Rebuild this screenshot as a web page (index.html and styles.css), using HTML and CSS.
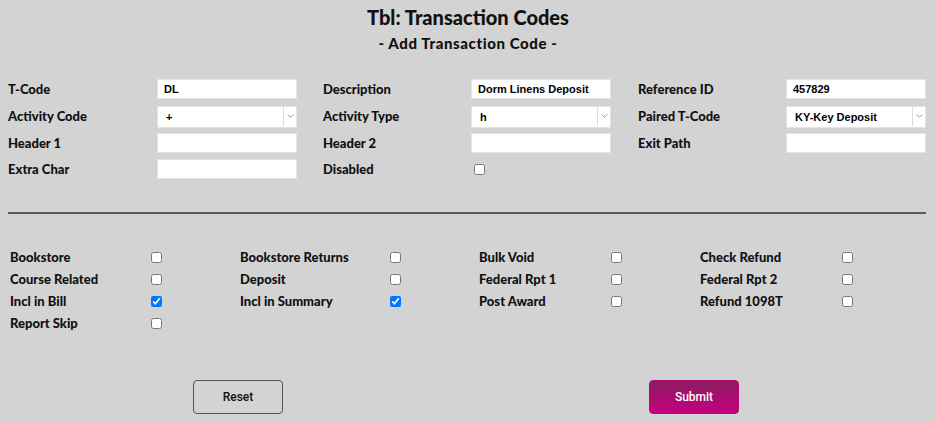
FILE: index.html
```html
<!DOCTYPE html>
<html>
<head>
<meta charset="utf-8">
<link rel="stylesheet" href="styles.css">
</head>
<body>
<header class="head">
  <h1 class="title">Tbl: Transaction Codes</h1>
  <h2 class="subtitle">- Add Transaction Code -</h2>
</header>
<form class="form">
  <div class="fields">
    <label class="lbl">T-Code</label>
    <input class="txt" type="text" value="DL">
    <label class="lbl lbl-2">Description</label>
    <input class="txt" type="text" value="Dorm Linens Deposit">
    <label class="lbl lbl-3">Reference ID</label>
    <input class="txt" type="text" value="457829">

    <label class="lbl">Activity Code</label>
    <div class="sel"><select><option>+</option></select><span class="arrow"><svg width="7" height="4" viewBox="0 0 7 4"><path d="M0.5 0.5 L3.5 3.2 L6.5 0.5" fill="none" stroke="#9a9a9a" stroke-width="1"/></svg></span></div>
    <label class="lbl lbl-2">Activity Type</label>
    <div class="sel"><select><option>h</option></select><span class="arrow"><svg width="7" height="4" viewBox="0 0 7 4"><path d="M0.5 0.5 L3.5 3.2 L6.5 0.5" fill="none" stroke="#9a9a9a" stroke-width="1"/></svg></span></div>
    <label class="lbl lbl-3">Paired T-Code</label>
    <div class="sel"><select><option>KY-Key Deposit</option></select><span class="arrow"><svg width="7" height="4" viewBox="0 0 7 4"><path d="M0.5 0.5 L3.5 3.2 L6.5 0.5" fill="none" stroke="#9a9a9a" stroke-width="1"/></svg></span></div>

    <label class="lbl">Header 1</label>
    <input class="txt" type="text">
    <label class="lbl lbl-2">Header 2</label>
    <input class="txt" type="text">
    <label class="lbl lbl-3">Exit Path</label>
    <input class="txt" type="text">

    <label class="lbl">Extra Char</label>
    <input class="txt" type="text">
    <label class="lbl lbl-2">Disabled</label>
    <div class="cbcell"><input class="cb cb-dis" type="checkbox"></div>
  </div>

  <div class="rule"></div>

  <div class="flags">
    <span class="flbl">Bookstore</span><span class="fcb"><input class="cb" type="checkbox"></span>
    <span class="flbl">Bookstore Returns</span><span class="fcb"><input class="cb" type="checkbox"></span>
    <span class="flbl">Bulk Void</span><span class="fcb"><input class="cb" type="checkbox"></span>
    <span class="flbl">Check Refund</span><span class="fcb"><input class="cb" type="checkbox"></span>

    <span class="flbl">Course Related</span><span class="fcb"><input class="cb" type="checkbox"></span>
    <span class="flbl">Deposit</span><span class="fcb"><input class="cb" type="checkbox"></span>
    <span class="flbl">Federal Rpt 1</span><span class="fcb"><input class="cb" type="checkbox"></span>
    <span class="flbl">Federal Rpt 2</span><span class="fcb"><input class="cb" type="checkbox"></span>

    <span class="flbl">Incl in Bill</span><span class="fcb"><input class="cb" type="checkbox" checked></span>
    <span class="flbl">Incl in Summary</span><span class="fcb"><input class="cb" type="checkbox" checked></span>
    <span class="flbl">Post Award</span><span class="fcb"><input class="cb" type="checkbox"></span>
    <span class="flbl">Refund 1098T</span><span class="fcb"><input class="cb" type="checkbox"></span>

    <span class="flbl">Report Skip</span><span class="fcb"><input class="cb" type="checkbox"></span>
  </div>

  <div class="actions">
    <button type="button" class="btn btn-reset">Reset</button>
    <button type="button" class="btn btn-submit">Submit</button>
  </div>
</form>
</body>
</html>
```

FILE: styles.css
```css
html, body {
  margin: 0;
  padding: 0;
}
body {
  background: #d3d3d3;
  width: 936px;
  height: 421px;
  overflow: hidden;
  font-family: "Lato", "DejaVu Sans", sans-serif;
  color: #111;
}
.head {
  text-align: center;
  padding-top: 5px;
}
.title {
  margin: 0;
  font-size: 20px;
  line-height: 24px;
  font-weight: 900;
}
.subtitle {
  margin: 2px 0 0;
  font-size: 15px;
  line-height: 24px;
  font-weight: 900;
  letter-spacing: 0.6px;
}
.form {
  padding: 0 10px 0 8px;
}
.fields {
  margin-top: 24px;
  display: grid;
  grid-template-columns: 149px 140px 174px 140px 175px 140px;
  row-gap: 6px;
  align-items: center;
}
.lbl {
  font-size: 13px;
  font-weight: 900;
}
.lbl-2 {
  padding-left: 26px;
}
.lbl-3 {
  padding-left: 27px;
}
.txt {
  box-sizing: border-box;
  height: 20px;
  width: 140px;
  margin: 0;
  border: 1px solid #e4e4e4;
  background: #fff;
  padding: 0 6px;
  font-family: "Liberation Sans", Arial, sans-serif;
  font-weight: 700;
  font-size: 11px;
  color: #000;
  outline: none;
}
.sel {
  position: relative;
  width: 140px;
  height: 22px;
}
.sel select {
  appearance: none;
  -webkit-appearance: none;
  box-sizing: border-box;
  width: 140px;
  height: 22px;
  margin: 0;
  border: 1px solid #e4e4e4;
  border-radius: 0;
  background: #fff;
  padding: 0 20px 0 8px;
  font-family: "Liberation Sans", Arial, sans-serif;
  font-weight: 700;
  font-size: 11px;
  color: #000;
  outline: none;
}
.arrow {
  position: absolute;
  right: 1px;
  top: 1px;
  bottom: 1px;
  width: 12px;
  border-left: 1px solid #dcdcdc;
  display: flex;
  align-items: center;
  justify-content: center;
  pointer-events: none;
}
.cbcell {
  height: 20px;
  display: flex;
  align-items: center;
}
.cb {
  width: 11px;
  height: 11px;
  margin: 0;
}
.cb-dis {
  margin-left: 3px;
}
.rule {
  margin-top: 33px;
  height: 0;
  border-top: 2px solid #5a5a5a;
}
.flags {
  margin-top: 32px;
  padding-left: 2px;
  display: grid;
  grid-template-columns: 141px 89px 150px 89px 132px 89px 142px 60px;
  grid-auto-rows: 22px;
  align-items: center;
}
.flbl {
  font-size: 13px;
  font-weight: 900;
}
.fcb {
  display: flex;
  align-items: center;
  height: 22px;
}
.actions {
  margin-top: 46px;
  display: flex;
  padding-left: 185px;
  gap: 366px;
}
.btn {
  box-sizing: border-box;
  width: 90px;
  height: 34px;
  border-radius: 4px;
  font-family: "Roboto", "Liberation Sans", sans-serif;
  font-size: 12px;
  font-weight: 500;
  cursor: pointer;
}
.btn-reset {
  background: transparent;
  border: 1px solid #555;
  color: #111;
}
.btn-submit {
  border: 1px solid #b30a78;
  background: linear-gradient(#8c1c60, #c4007e);
  color: #fff;
}
```
